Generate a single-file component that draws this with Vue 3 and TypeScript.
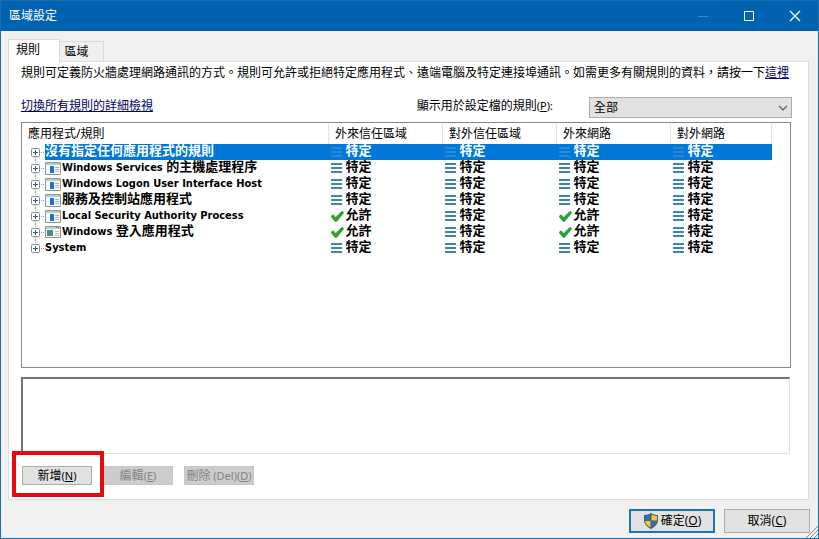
<script setup lang="ts">
import { ref } from 'vue'

type Access = 'custom' | 'allow'

interface Rule {
  name: string
  icon: 'app' | 'green' | null
  access: Access[]
}

interface NamePart {
  text: string
  latin: boolean
}

const labels: Record<Access, string> = { custom: '特定', allow: '允許' }
const columns = ['外來信任區域', '對外信任區域', '外來網路', '對外網路']
const allCustom: Access[] = ['custom', 'custom', 'custom', 'custom']
const inboundAllowed: Access[] = ['allow', 'custom', 'allow', 'custom']

const rules: Rule[] = [
  { name: '沒有指定任何應用程式的規則', icon: null, access: allCustom },
  { name: 'Windows Services 的主機處理程序', icon: 'app', access: allCustom },
  { name: 'Windows Logon User Interface Host', icon: 'app', access: allCustom },
  { name: '服務及控制站應用程式', icon: 'app', access: allCustom },
  { name: 'Local Security Authority Process', icon: 'app', access: inboundAllowed },
  { name: 'Windows 登入應用程式', icon: 'green', access: inboundAllowed },
  { name: 'System', icon: null, access: allCustom },
]

// Latin and Chinese runs use different type sizes.
function splitName(name: string): NamePart[] {
  const runs = name.match(/[\x20-\x7e]+|[^\x20-\x7e]+/g) ?? []
  return runs.map((text) => ({ text, latin: /^[\x20-\x7e]/.test(text) }))
}

const selected = ref(0)
const profile = ref('all')
const details = ref('')
</script>

<template>
  <div class="window">
    <header class="titlebar">
      <h1>區域設定</h1>
      <div class="controls">
        <button type="button" aria-label="最小化" disabled>
          <svg width="12" height="12" viewBox="0 0 12 12"><path d="M1 6.500h10" stroke="#3c87c8" fill="none" /></svg>
        </button>
        <button type="button" aria-label="最大化">
          <svg width="12" height="12" viewBox="0 0 12 12"><path d="M1.500 1.500h9v9h-9z" stroke="#fff" fill="none" /></svg>
        </button>
        <button type="button" aria-label="關閉">
          <svg width="12" height="12" viewBox="0 0 12 12"><path d="M1 1l10 10M11 1L1 11" stroke="#fff" stroke-width="1.200" fill="none" /></svg>
        </button>
      </div>
    </header>

    <main class="body">
      <div class="tabs" role="tablist">
        <button type="button" class="tab active" role="tab" aria-selected="true">規則</button>
        <button type="button" class="tab" role="tab" aria-selected="false">區域</button>
      </div>

      <section class="panel">
        <p class="intro">規則可定義防火牆處理網路通訊的方式。規則可允許或拒絕特定應用程式、遠端電腦及特定連接埠通訊。如需更多有關規則的資料，請按一下<a href="#">這裡</a></p>

        <div class="filter">
          <a href="#">切換所有規則的詳細檢視</a>
          <div class="field">
            <label for="profile">顯示用於設定檔的規則<span class="key">(<u>P</u>):</span></label>
            <div class="select">
              <select id="profile" v-model="profile">
                <option value="all">全部</option>
              </select>
              <svg width="10" height="6" viewBox="0 0 10 6"><path d="M1 .8l4 4 4-4" stroke="#555" stroke-width="1.200" fill="none" /></svg>
            </div>
          </div>
        </div>

        <div class="list">
          <table>
            <thead>
              <tr>
                <th scope="col">應用程式/規則</th>
                <th v-for="column in columns" :key="column" scope="col">{{ column }}</th>
              </tr>
            </thead>
            <tbody>
              <tr v-for="(rule, index) in rules" :key="rule.name" :class="{ selected: index === selected }" @click="selected = index">
                <td>
                  <div class="node">
                    <button type="button" class="expander" :aria-label="'展開 ' + rule.name">
                      <svg width="15" height="16" viewBox="0 0 15 16">
                        <path v-if="index > 0" d="M4.500 0v4" stroke="#999" stroke-dasharray="1 1" />
                        <path v-if="index < rules.length - 1" d="M4.500 13v3" stroke="#999" stroke-dasharray="1 1" />
                        <path d="M10 8.500h5" stroke="#999" stroke-dasharray="1 1" />
                        <rect x=".5" y="4.500" width="8" height="8" rx="1" fill="#fff" stroke="#8a8a8a" />
                        <path d="M2 8.500h5M4.500 6v5" stroke="#34579c" />
                      </svg>
                    </button>
                    <span class="name">
                      <svg v-if="rule.icon === 'app'" width="17" height="16" viewBox="0 0 17 16">
                        <path d="M.5 2.500h15v12H.5z" fill="#f8fafb" stroke="#8d989d" />
                        <path d="M1 3h14v2H1z" fill="#bcc6ca" />
                        <path d="M5 6h4v7H5z" fill="#1278d4" />
                        <path d="M10 7.500h4M10 9.500h4M10 11.500h4" stroke="#a7b4bc" />
                      </svg>
                      <svg v-else-if="rule.icon === 'green'" width="17" height="16" viewBox="0 0 17 16">
                        <path d="M.5 2.500h15v11H.5z" fill="#f8fafb" stroke="#8d989d" />
                        <path d="M1 3h14v2H1z" fill="#c3cccf" />
                        <path d="M11 3.500h1M13 3.500h1" stroke="#3f6fae" />
                        <path d="M2 6h6v6H2z" fill="#4d8f7c" />
                        <path d="M10 7.500h4M10 9.500h4M10 11.500h4" stroke="#b6c0c4" />
                      </svg>
                      <span class="text"><span v-for="part in splitName(rule.name)" :key="part.text" :class="{ latin: part.latin }">{{ part.text }}</span></span>
                    </span>
                  </div>
                </td>
                <td v-for="(access, column) in rule.access" :key="column">
                  <div class="access">
                    <svg v-if="access === 'custom'" class="lines" width="13" height="16" viewBox="0 0 13 16">
                      <path d="M0 4h11M0 8h11M0 12h11" stroke="currentColor" stroke-width="2" />
                    </svg>
                    <svg v-else width="13" height="16" viewBox="0 0 13 16">
                      <path d="M0 8.500l2-1.800 2.800 2.800L11 3.200l1.700 1.600L5.500 13.500H4.200z" fill="#2ca52c" stroke="#168016" stroke-width=".6" />
                    </svg>
                    <span class="text">{{ labels[access] }}</span>
                  </div>
                </td>
              </tr>
            </tbody>
          </table>
        </div>

        <textarea v-model="details" class="details" aria-label="規則說明" readonly></textarea>

        <div class="actions">
          <div class="marked">
            <button type="button" class="small">新增<span class="key">(<u>N</u>)</span></button>
          </div>
          <button type="button" class="small" disabled>編輯<span class="key">(<u>E</u>)</span></button>
          <button type="button" class="small" disabled>刪除<span class="key"> (Del)(<u>D</u>)</span></button>
        </div>
      </section>
    </main>

    <footer class="footer">
      <button type="button" class="primary">
        <svg width="16" height="16" viewBox="0 0 16 16">
          <path d="M8 0C6 1.500 3.500 2 1 2v5c0 4 3 7 7 9 4-2 7-5 7-9V2c-2.500 0-5-.5-7-2z" fill="#4d5963" />
          <path d="M7.500 1.600C6 2.500 4 3 2 3v4.500h5.500z" fill="#2272c3" />
          <path d="M8.500 1.600C10 2.500 12 3 14 3v4.500H8.500z" fill="#fbc62f" />
          <path d="M2 8h5.500v6.500C4.500 13 2.300 11 2 8z" fill="#fbc62f" />
          <path d="M14 8H8.500v6.500C11.500 13 13.700 11 14 8z" fill="#2272c3" />
        </svg>
        <span>確定(<u>O</u>)</span>
      </button>
      <button type="button"><span>取消(<u>C</u>)</span></button>
    </footer>
    <svg class="grip" width="12" height="12" viewBox="0 0 12 12"><path d="M0 12L12 0M4 12l8-8M8 12l4-4" stroke="#8c8c8c" fill="none" /></svg>
  </div>
</template>

<style>
body {
  margin: 0;
}
</style>

<style scoped>
.window {
  position: relative;
  box-sizing: border-box;
  display: flex;
  flex-direction: column;
  min-height: 100vh;
  border: 1px solid #1b6cad;
  background: #f0f0f0;
  color: #000;
  font: 12px/16px "Noto Sans", "Noto Sans CJK TC", sans-serif;
}

button,
select,
textarea {
  box-sizing: border-box;
  margin: 0;
  padding: 0;
  border: 0;
  border-radius: 0;
  color: inherit;
  font: inherit;
}

svg {
  display: block;
  flex: none;
}

a {
  color: #000060;
  text-decoration: underline;
}

.key {
  font-size: 11px;
}

.titlebar {
  display: flex;
  justify-content: space-between;
  align-items: center;
  height: 30px;
  padding-left: 8px;
  background: #0063b1;
  color: #fff;
}

.titlebar h1 {
  margin: 0;
  font-size: 12px;
  font-weight: 400;
}

.controls {
  display: flex;
  height: 100%;
}

.controls button {
  display: grid;
  place-items: center;
  width: 46px;
  background: none;
}

.body {
  display: flex;
  flex: 1;
  flex-direction: column;
  padding: 8px 9px 0 7px;
}

.tabs {
  display: flex;
  align-items: flex-end;
}

.tab {
  width: 44px;
  height: 20px;
  padding-right: 10px;
  border: 1px solid #d9d9d9;
  border-bottom: 0;
  border-left: 0;
  background: #f0f0f0;
}

.tab.active {
  z-index: 1;
  width: 52px;
  height: 23px;
  margin-bottom: -1px;
  padding-right: 12px;
  padding-bottom: 3px;
  border-left: 1px solid #d9d9d9;
  background: #fff;
}

.panel {
  display: flex;
  flex: 1;
  flex-direction: column;
  padding: 3px 17px 14px 12px;
  border: 1px solid #dcdcdc;
  background: #fff;
}

.intro {
  margin: 0;
  white-space: nowrap;
}

.filter {
  display: flex;
  justify-content: space-between;
  align-items: center;
  margin: 16px 0 4px;
}

.filter > a,
.field label {
  padding-bottom: 4px;
}

.field {
  display: flex;
  align-items: center;
  gap: 36px;
}

.select {
  display: grid;
  align-items: center;
  margin-right: -1px;
}

.select select,
.select svg {
  grid-area: 1 / 1;
}

.select select {
  width: 203px;
  height: 21px;
  padding: 0 4px;
  border: 1px solid #adadad;
  background: #e1e1e1;
  appearance: none;
}

.select svg {
  justify-self: end;
  margin-right: 4px;
  pointer-events: none;
}

.list {
  flex: 1;
  padding: 1px 18px 0 0;
  border: 1px solid #828790;
}

table {
  width: 100%;
  border-collapse: collapse;
  table-layout: fixed;
}

th {
  width: 114px;
  height: 20px;
  box-sizing: border-box;
  padding: 0 0 0 6px;
  border-right: 1px solid #e2e2e2;
  font-weight: 400;
  text-align: left;
}

th:first-child {
  width: auto;
}

th:last-child {
  width: 101px;
}

td {
  height: 16px;
  padding: 0;
  font-size: 13px;
  font-weight: 700;
}

.node,
.name,
.access {
  display: flex;
  align-items: center;
  height: 16px;
  white-space: nowrap;
}

.text {
  padding-bottom: 2px;
  font-family: "Liberation Sans", "Noto Sans CJK TC", sans-serif;
  line-height: 14px;
  white-space: pre;
}

.latin {
  font-family: "DejaVu Sans Condensed", "Noto Sans", sans-serif;
  font-size: 11px;
}

.node {
  padding-left: 9px;
}

.name {
  flex: 1;
}

.expander {
  width: 15px;
  height: 16px;
  margin-right: -1px;
  background: none;
}

.access {
  gap: 2px;
  padding-left: 2px;
}

.lines {
  color: #4182aa;
}

.selected .name,
.selected td + td {
  background: #0078d7;
  color: #fff;
}

.selected .lines {
  color: #2b87d6;
}

.details {
  height: 77px;
  margin: 9px 1px 12px 0;
  border: 1px solid #e0e0e0;
  border-top: 2px solid #737373;
  border-left: 2px solid #737373;
  background: #fff;
  resize: none;
  outline: 0;
}

.actions {
  display: flex;
  gap: 11px;
  padding-left: 1px;
}

.small {
  display: block;
  width: 70px;
  height: 19px;
  border: 1px solid #adadad;
  background: #e1e1e1;
  line-height: 16px;
  white-space: nowrap;
}

.small:disabled {
  border-color: #c6c6c6;
  background: #ccc;
  color: #838383;
}

.marked {
  position: relative;
}

.marked::after {
  position: absolute;
  z-index: 2;
  inset: -15px -12px -12px -10px;
  border: 4px solid #e60a0f;
  content: "";
  pointer-events: none;
}

.footer {
  display: flex;
  justify-content: flex-end;
  gap: 9px;
  padding: 9px 8px 5px;
}

.footer button {
  display: flex;
  justify-content: center;
  align-items: center;
  gap: 2px;
  width: 86px;
  height: 24px;
  border: 1px solid #adadad;
  background: #e1e1e1;
}

.footer .primary {
  border: 2px solid #1a74b4;
}

.grip {
  position: absolute;
  right: 0;
  bottom: 0;
}
</style>
